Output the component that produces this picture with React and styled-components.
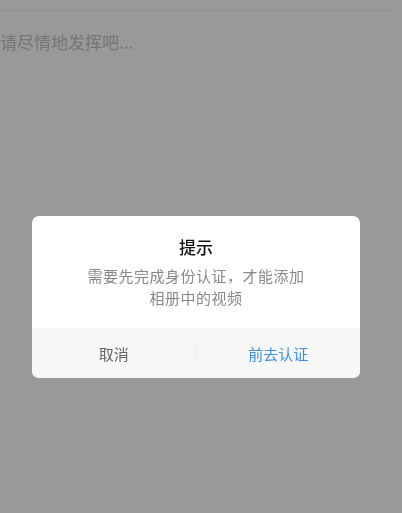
import styled, { createGlobalStyle } from 'styled-components';

const GlobalStyle = createGlobalStyle`
    html, body {
        margin: 0;
        padding: 0;
        background: #fff;
        font-family: "Noto Sans CJK SC", "Noto Sans", sans-serif;
    }
`;

export default function App() {
    return (
        <>
            <GlobalStyle />
            <Page>
                <TopBar />
                <Editor>请尽情地发挥吧...</Editor>
            </Page>
            <Overlay>
                <Dialog>
                    <Body>
                        <Title>提示</Title>
                        <Message>
                            需要先完成身份认证，才能添加
                            <br />
                            相册中的视频
                        </Message>
                    </Body>
                    <Footer>
                        <Action>取消</Action>
                        <Divider />
                        <Action primary>前去认证</Action>
                    </Footer>
                </Dialog>
            </Overlay>
        </>
    );
}

const Page = styled.div`
    width: 402px;
    height: 513px;
    background: #fff;
`;
const TopBar = styled.div`
    height: 10px;
    width: 392px;
    border-bottom: 1px solid #eeeeee;
`;
const Editor = styled.div`
    padding-top: 19px;
    font-size: 17px;
    line-height: 24px;
    color: #c4c4c4;
`;
const Overlay = styled.div`
    position: fixed;
    inset: 0;
    background: rgba(0, 0, 0, 0.4);
    display: flex;
    justify-content: flex-start;
    align-items: flex-start;
    padding: 216px 0 0 32px;
`;
const Dialog = styled.div`
    width: 328px;
    background: #fff;
    border-radius: 7px;
    overflow: hidden;
`;
const Body = styled.div`
    padding: 19px 20px 19px;
    text-align: center;
`;
const Title = styled.div`
    font-size: 17px;
    line-height: 24px;
    font-weight: 500;
    color: #111;
    margin-bottom: 6px;
`;
const Message = styled.div`
    font-size: 15px;
    line-height: 22px;
    color: #888;
    letter-spacing: 0.5px;
`;
const Footer = styled.div`
    height: 50px;
    background: #f7f7f7;
    display: flex;
    align-items: center;
`;
const Action = styled.div`
    flex: 1;
    text-align: center;
    font-size: 15px;
    color: ${props => (props.primary ? '#3b8fe5' : '#666')};
`;
const Divider = styled.div`
    width: 1px;
    height: 18px;
    background: #ececec;
`;
